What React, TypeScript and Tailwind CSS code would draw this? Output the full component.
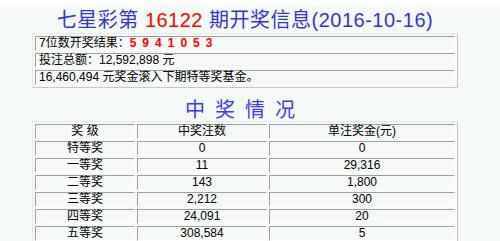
const rows = [
  { level: "特等奖", count: "0", prize: "0" },
  { level: "一等奖", count: "11", prize: "29,316" },
  { level: "二等奖", count: "143", prize: "1,800" },
  { level: "三等奖", count: "2,212", prize: "300" },
  { level: "四等奖", count: "24,091", prize: "20" },
  { level: "五等奖", count: "308,584", prize: "5" },
];

const cell =
  "h-[15px] p-0 px-[3px] leading-[13px] border border-t-[#a0a09a] border-l-[#a0a09a] border-b-white border-r-white";

export default function App() {
  return (
    <div className="min-h-screen bg-[#f5f9f7] font-['Liberation_Sans','Noto_Sans_CJK_SC',sans-serif] text-black">
      <div className="h-[5px] bg-white" />
      <div className="w-[490px]">
        <h1 className="pt-[3px] text-center text-[20px] leading-[24px] font-normal tracking-[0.5px] text-[#3434d4]">
          七星彩第 <span className="text-[#ff0000]">16122</span> 期开奖信息(2016-10-16)
        </h1>

        <table className="mx-auto mt-[1px] w-[426px] border-separate border-spacing-[2px] border border-t-[#e8ece9] border-l-[#e8ece9] border-b-[#c8c8c0] border-r-[#c8c8c0] text-[12px]">
          <tbody>
            <tr>
              <td className={cell}>
                7位数开奖结果：
                <span className="font-bold tracking-[6px] text-[#ff0000]">5941053</span>
              </td>
            </tr>
            <tr>
              <td className={cell}>投注总额：12,592,898 元</td>
            </tr>
            <tr>
              <td className={cell}>16,460,494 元奖金滚入下期特等奖基金。</td>
            </tr>
          </tbody>
        </table>

        <h2 className="mt-[11px] text-center text-[20px] leading-[22px] tracking-[10px] text-[#3a3af0]">
          中奖情况
        </h2>

        <table className="mx-auto w-[426px] border-separate border-spacing-[2px] border border-t-[#e8ece9] border-l-[#e8ece9] border-b-[#c8c8c0] border-r-[#c8c8c0] text-center text-[12px]">
          <tbody>
            <tr>
              <td className={`${cell} w-[100px]`}>奖 级</td>
              <td className={`${cell} w-[130px]`}>中奖注数</td>
              <td className={cell}>单注奖金(元)</td>
            </tr>
            {rows.map((r) => (
              <tr key={r.level}>
                <td className={cell}>{r.level}</td>
                <td className={cell}>{r.count}</td>
                <td className={cell}>{r.prize}</td>
              </tr>
            ))}
          </tbody>
        </table>
      </div>
    </div>
  );
}
